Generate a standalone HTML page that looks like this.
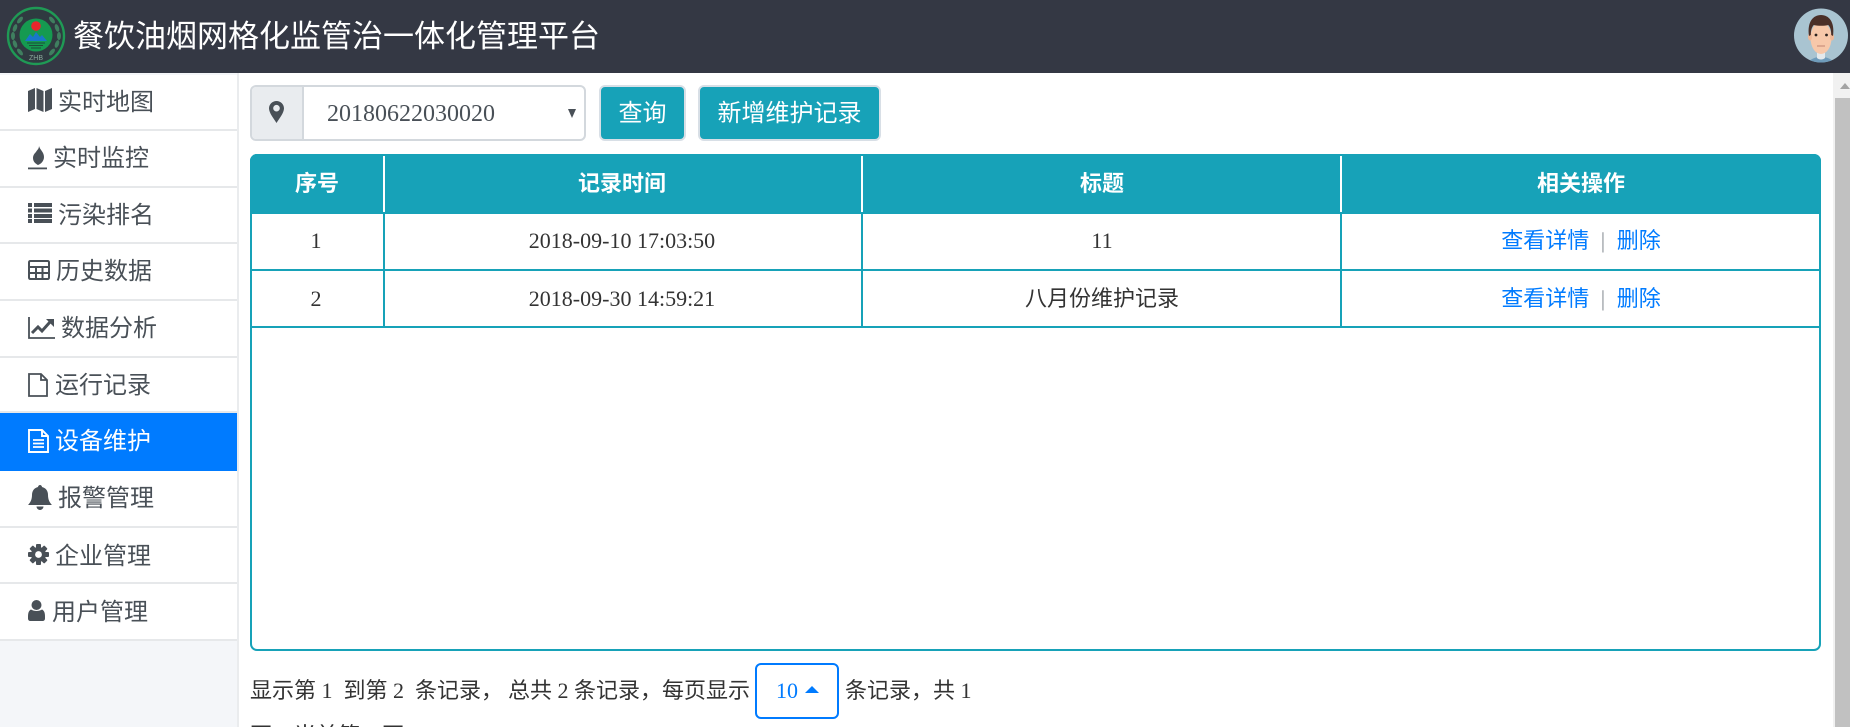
<!DOCTYPE html>
<html lang="zh">
<head>
<meta charset="utf-8">
<title>餐饮油烟网格化监管治一体化管理平台</title>
<style>
html,body{margin:0;padding:0;width:1850px;height:727px;overflow:hidden;background:#fff}
body{font-family:"Liberation Serif","Noto Sans CJK SC",serif;color:#333;position:relative}
.abs,.abs *{box-sizing:border-box}
.abs{position:absolute}
#hd{left:0;top:0;width:1850px;height:73px;background:#343844}
#title{left:73px;top:15px;height:44px;line-height:44px;font-size:31px;color:#fff;white-space:nowrap;font-family:"Liberation Sans","Noto Sans CJK SC",sans-serif}
#side{left:0;top:73px;width:239px;height:654px;background:#f4f6f9;border-right:2px solid #eaecee}
.it{position:absolute;left:0;width:237px;background:#fff;border-bottom:2px solid #e6e8ea}
.it.on{background:#007bff;border-bottom:0}
.t{position:absolute;font-size:24px;line-height:34px;height:34px;color:#495057;white-space:nowrap;font-family:"Liberation Sans","Noto Sans CJK SC",sans-serif}
.on .t{color:#fff}
.ic{position:absolute;overflow:visible}
#sel{left:250px;top:85px;width:336px;height:56px;border:2px solid #d3d8dd;border-radius:6px;background:#fff;overflow:hidden}
#add{position:absolute;left:0;top:0;width:52px;height:52px;background:#e9ecef;border-right:2px solid #d3d8dd}
#val{position:absolute;left:75px;top:8px;font-size:24px;line-height:38px;color:#495057;letter-spacing:0}
#car{position:absolute;left:316px;top:22px;width:0;height:0;border-left:4px solid transparent;border-right:4px solid transparent;border-top:9px solid #495057}
.btn{top:85px;height:56px;background:#17a2b8;border:2px solid #d8dfe6;border-radius:6px;color:#fff;font-size:24px;line-height:54px;text-align:center;font-family:"Liberation Sans","Noto Sans CJK SC",sans-serif}
#tb{left:250px;top:154px;width:1571px;height:497px;border:2px solid #17a2b8;border-radius:7px;background:#fff}
.head{left:250px;top:154px;width:1571px;height:60px;background:#17a2b8;border-radius:7px 7px 0 0}
.vw{width:2px;background:#fff;top:156px;height:56px}
.vt{width:2px;background:#17a2b8;top:214px;height:114px}
.hl{left:250px;width:1571px;height:2px;background:#17a2b8}
.c{transform:translateX(-50%);text-align:center;white-space:nowrap;font-size:22px;line-height:32px;height:32px}
.h{color:#fff;font-weight:bold;font-family:"Liberation Sans","Noto Sans CJK SC",sans-serif}
a{color:#007bff;text-decoration:none}
.sep{color:#8a9097;margin:0 6px}
.foot{top:675px;font-size:22px;line-height:32px;white-space:nowrap;color:#333}
#foot2{left:250px;top:720px;font-size:22px;line-height:32px;white-space:nowrap;color:#333}
#ps{left:755px;top:663px;width:84px;height:56px;border:2px solid #007bff;border-radius:6px;background:#fff}
#ps span{position:absolute;left:19px;top:10px;font-size:22px;line-height:32px;color:#007bff}
#ps i{position:absolute;left:48px;top:21px;width:0;height:0;border-left:7px solid transparent;border-right:7px solid transparent;border-bottom:7px solid #007bff}
#sb{left:1833px;top:73px;width:17px;height:654px;background:#f1f1f1}
#thumb{position:absolute;left:2px;top:25px;width:15px;height:629px;background:#c1c1c1}
#arr{position:absolute;left:7px;top:10px;width:0;height:0;border-left:5px solid transparent;border-right:5px solid transparent;border-bottom:6px solid #a3a3a3}
</style>
</head>
<body>
<div class="abs" id="hd"></div>

<svg class="abs" style="left:0;top:0" width="73" height="73" viewBox="0 0 73 73">
  <circle cx="36" cy="36" r="28" fill="#2f3a40" stroke="#1f9a55" stroke-width="2.4"/>
  <g fill="#3f7f5f">
    <ellipse cx="15" cy="28" rx="2" ry="4" transform="rotate(20 15 28)"/>
    <ellipse cx="13" cy="36" rx="2" ry="4"/>
    <ellipse cx="15" cy="44" rx="2" ry="4" transform="rotate(-20 15 44)"/>
    <ellipse cx="20" cy="52" rx="2" ry="4" transform="rotate(-40 20 52)"/>
    <ellipse cx="20" cy="20" rx="2" ry="4" transform="rotate(40 20 20)"/>
    <ellipse cx="57" cy="28" rx="2" ry="4" transform="rotate(-20 57 28)"/>
    <ellipse cx="59" cy="36" rx="2" ry="4"/>
    <ellipse cx="57" cy="44" rx="2" ry="4" transform="rotate(20 57 44)"/>
    <ellipse cx="52" cy="52" rx="2" ry="4" transform="rotate(40 52 52)"/>
    <ellipse cx="52" cy="20" rx="2" ry="4" transform="rotate(-40 52 20)"/>
  </g>
  <circle cx="36" cy="35" r="16.500" fill="#159a50"/>
  <circle cx="36" cy="26" r="4.800" fill="#e8262c"/>
  <path d="M25 41l5-7 3 3 3-5 4 5 2-2 5 6z" fill="#1878c8"/>
  <path d="M27 43h18M29 45.500h14M31 48h10" stroke="#1c4f3a" stroke-width="1"/>
  <text x="36" y="60" text-anchor="middle" font-size="7" fill="#8aa89a" font-family="Liberation Sans,sans-serif">ZHB</text>
</svg>
<div class="abs" id="title">餐饮油烟网格化监管治一体化管理平台</div>

<svg class="abs" style="left:1790px;top:5px" width="60" height="62" viewBox="0 0 60 62">
  <defs><clipPath id="cp"><circle cx="31" cy="30.500" r="27"/></clipPath></defs>
  <circle cx="31" cy="30.500" r="27" fill="#a9c4d1"/>
  <g clip-path="url(#cp)">
    <path d="M17 60c2-6 8-8 14-8s12 2 14 8z" fill="#6f9cbb"/>
    <path d="M27 46h8v7c-2 2-6 2-8 0z" fill="#e4e9ec"/>
    <ellipse cx="31" cy="33" rx="10.500" ry="16" fill="#f7c8aa"/>
    <ellipse cx="20" cy="32" rx="2" ry="3.500" fill="#f0b898"/>
    <ellipse cx="42" cy="32" rx="2" ry="3.500" fill="#f0b898"/>
    <path d="M19 31c-2-14 4-21 12-21s14 7 12 21l-1.800-1c0-5-1-8-3-10-4 1-10 1-14.400 0-2 2-3 5-3 10z" fill="#4a2f28"/>
    <circle cx="26" cy="30" r="1.400" fill="#2d2320"/>
    <circle cx="36.500" cy="30" r="1.400" fill="#2d2320"/>
    <path d="M27 41h8" stroke="#d39a85" stroke-width="1.500"/>
  </g>
</svg>

<div class="abs" id="side">
  <div class="it" style="top:2px;height:56px"><div class="t" style="left:58px;top:11px">实时地图</div>
    <svg class="ic" style="left:28px;top:13px" width="24" height="24" viewBox="0 0 24 24"><path fill="#495057" d="M0 3l7-3v21l-7 3zM8.500 0l7 3v21l-7-3zM17 3l7-3v21l-7 3z"/></svg></div>
  <div class="it" style="top:58px;height:57px"><div class="t" style="left:53px;top:11px">实时监控</div>
    <svg class="ic" style="left:28px;top:15px" width="20" height="24" viewBox="0 0 20 24"><path fill="#495057" d="M11 0c1 4 5 6 5 11 0 4-3 7-6 8-2-1-5-3-5-7 0-3 2-5 3-6 1-2 3-3 3-6z"/><rect x="0" y="21.500" width="19" height="1.800" fill="#495057"/></svg></div>
  <div class="it" style="top:115px;height:56px"><div class="t" style="left:58px;top:11px">污染排名</div>
    <svg class="ic" style="left:28px;top:15px" width="24" height="20" viewBox="0 0 24 20"><path fill="#495057" d="M0 0h4v4H0zM6 0h18v4H6zM0 5.500h4v4H0zM6 5.500h18v4H6zM0 11h4v4H0zM6 11h18v4H6zM0 16h4v4H0zM6 16h18v4H6z"/></svg></div>
  <div class="it" style="top:171px;height:57px"><div class="t" style="left:56px;top:11px">历史数据</div>
    <svg class="ic" style="left:28px;top:16px" width="22" height="20" viewBox="0 0 22 20"><path fill="none" stroke="#495057" stroke-width="2" d="M2.500 1h17q1.500 0 1.500 1.500v15q0 1.500-1.500 1.500h-17q-1.500 0-1.500-1.500v-15q0-1.500 1.500-1.500zM1 7h20M1 13h20M8 7v12M14.500 7v12"/></svg></div>
  <div class="it" style="top:228px;height:57px"><div class="t" style="left:61px;top:11px">数据分析</div>
    <svg class="ic" style="left:28px;top:16px" width="27" height="22" viewBox="0 0 27 22"><path fill="none" stroke="#495057" stroke-width="1.800" d="M1 0v21h26"/><path fill="none" stroke="#495057" stroke-width="3" d="M4 16l6-6 4 4 8-9"/><path fill="#495057" d="M18 2h8v8z"/></svg></div>
  <div class="it" style="top:285px;height:55px"><div class="t" style="left:55px;top:11px">运行记录</div>
    <svg class="ic" style="left:28px;top:15px" width="20" height="24" viewBox="0 0 20 24"><path fill="none" stroke="#495057" stroke-width="1.800" d="M1 1h12l6 6v16H1zM13 1v6h6"/></svg></div>
  <div class="it on" style="top:340px;height:58px"><div class="t" style="left:55px;top:12px">设备维护</div>
    <svg class="ic" style="left:28px;top:16px" width="21" height="24" viewBox="0 0 21 24"><path fill="none" stroke="#fff" stroke-width="1.900" d="M1 1h13l6 6v16H1zM14 1v6h6"/><path stroke="#fff" stroke-width="1.800" d="M5 11h11M5 14.500h11M5 18h11"/></svg></div>
  <div class="it" style="top:398px;height:57px"><div class="t" style="left:58px;top:11px">报警管理</div>
    <svg class="ic" style="left:28px;top:14px" width="24" height="25" viewBox="0 0 24 25"><path fill="#495057" d="M12 0c1 0 2 1 2 2 4 1 6 4 6 8 0 5 2 8 4 10H0c2-2 4-5 4-10 0-4 2-7 6-8 0-1 1-2 2-2zM8.500 21.500h7c0 2-2 3.500-3.500 3.500s-3.500-1.500-3.500-3.500z"/></svg></div>
  <div class="it" style="top:455px;height:56px"><div class="t" style="left:55px;top:12px">企业管理</div>
    <svg class="ic" style="left:28px;top:16px" width="21" height="21" viewBox="0 0 21 21"><g fill="#495057"><circle cx="10.500" cy="10.500" r="7.500"/><rect x="8" y="0" width="5" height="21" rx="1"/><rect x="8" y="0" width="5" height="21" rx="1" transform="rotate(45 10.500 10.500)"/><rect x="8" y="0" width="5" height="21" rx="1" transform="rotate(90 10.500 10.500)"/><rect x="8" y="0" width="5" height="21" rx="1" transform="rotate(135 10.500 10.500)"/></g><circle cx="10.500" cy="10.500" r="3.400" fill="#fff"/></svg></div>
  <div class="it" style="top:511px;height:57px"><div class="t" style="left:52px;top:12px">用户管理</div>
    <svg class="ic" style="left:28px;top:16px" width="17" height="21" viewBox="0 0 17 21"><circle cx="8.500" cy="5" r="5" fill="#495057"/><path fill="#495057" d="M3 9.500c3 2 8 2 11 0 2 1 3 3 3 7v2c0 1.500-1 2.500-2.500 2.500h-12C1 21 0 20 0 18.500v-2c0-4 1-6 3-7z"/></svg></div>
</div>

<div class="abs" id="sel">
  <div id="add"><svg style="position:absolute;left:17px;top:14px" width="15" height="22" viewBox="0 0 15 22"><path fill="#495057" fill-rule="evenodd" d="M7.500 0C3.400 0 0 3.300 0 7.400 0 12 5 18 7.500 22 10 18 15 12 15 7.400 15 3.300 11.600 0 7.500 0zm0 10.500a3.300 3.300 0 1 1 0-6.600 3.300 3.300 0 0 1 0 6.600z"/></svg></div>
  <div id="val">20180622030020</div>
  <div id="car"></div>
</div>
<div class="abs btn" style="left:599px;width:87px">查询</div>
<div class="abs btn" style="left:698px;width:183px">新增维护记录</div>

<div class="abs" id="tb"></div>
<div class="abs head"></div>
<div class="abs vw" style="left:383px"></div>
<div class="abs vw" style="left:861px"></div>
<div class="abs vw" style="left:1340px"></div>
<div class="abs vt" style="left:383px"></div>
<div class="abs vt" style="left:861px"></div>
<div class="abs vt" style="left:1340px"></div>
<div class="abs hl" style="top:269px"></div>
<div class="abs hl" style="top:326px"></div>

<div class="abs c h" style="left:317px;top:168px">序号</div>
<div class="abs c h" style="left:622px;top:168px">记录时间</div>
<div class="abs c h" style="left:1102px;top:168px">标题</div>
<div class="abs c h" style="left:1581px;top:168px">相关操作</div>

<div class="abs c" style="left:316px;top:225px">1</div>
<div class="abs c" style="left:622px;top:225px">2018-09-10 17:03:50</div>
<div class="abs c" style="left:1102px;top:225px">11</div>
<div class="abs c" style="left:1581px;top:225px"><a href="#">查看详情</a><span class="sep"> | </span><a href="#">删除</a></div>

<div class="abs c" style="left:316px;top:283px">2</div>
<div class="abs c" style="left:622px;top:283px">2018-09-30 14:59:21</div>
<div class="abs c" style="left:1102px;top:283px">八月份维护记录</div>
<div class="abs c" style="left:1581px;top:283px"><a href="#">查看详情</a><span class="sep"> | </span><a href="#">删除</a></div>

<div class="abs foot" style="left:250px">显示第 1 &nbsp;到第 2 &nbsp;条记录，<span style="margin-left:5px">总共</span> 2 条记录，每页显示</div>
<div class="abs" id="ps"><span>10</span><i></i></div>
<div class="abs foot" style="left:845px">条记录，共 1</div>
<div class="abs" id="foot2">页，当前第 1 页</div>

<div class="abs" id="sb"><div id="arr"></div><div id="thumb"></div></div>
</body>
</html>
